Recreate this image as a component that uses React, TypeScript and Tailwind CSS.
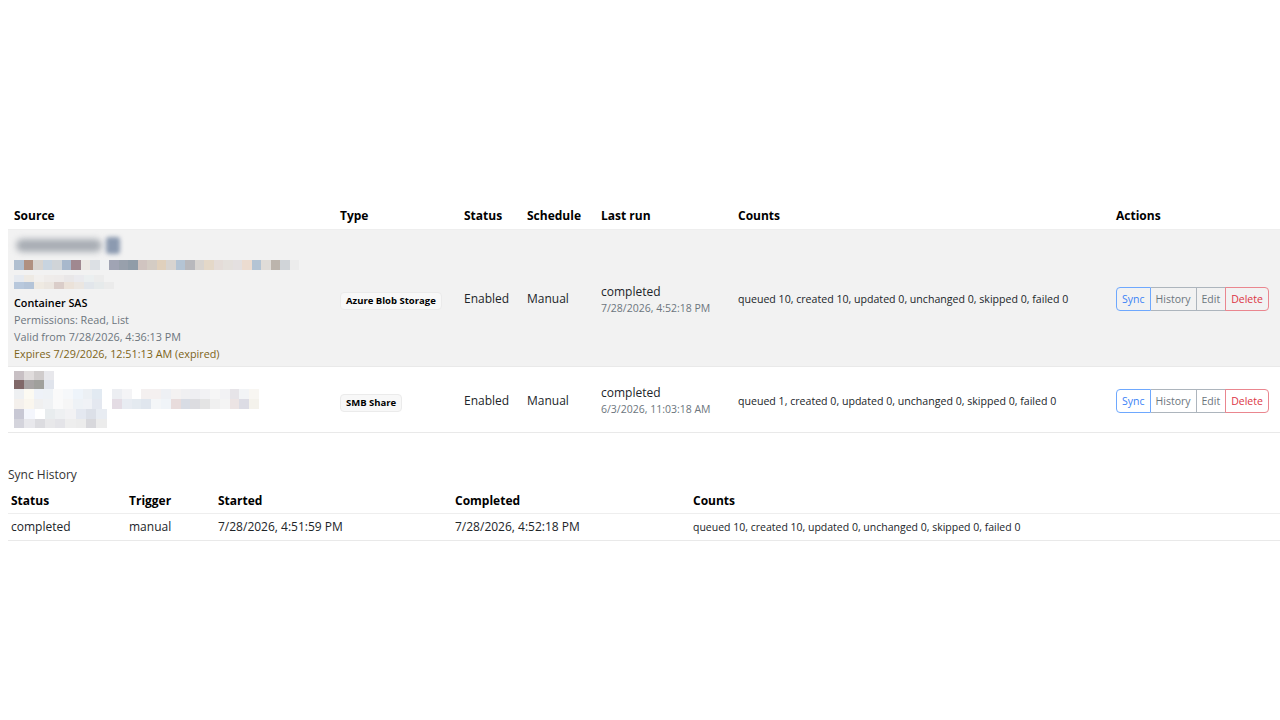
import React from 'react';

type Source = {
  kind: 'azure' | 'smb';
  type: string;
  status: string;
  schedule: string;
  lastStatus: string;
  lastAt: string;
  counts: string;
};

const sources: Source[] = [
  {
    kind: 'azure',
    type: 'Azure Blob Storage',
    status: 'Enabled',
    schedule: 'Manual',
    lastStatus: 'completed',
    lastAt: '7/28/2026, 4:52:18 PM',
    counts: 'queued 10, created 10, updated 0, unchanged 0, skipped 0, failed 0',
  },
  {
    kind: 'smb',
    type: 'SMB Share',
    status: 'Enabled',
    schedule: 'Manual',
    lastStatus: 'completed',
    lastAt: '6/3/2026, 11:03:18 AM',
    counts: 'queued 1, created 0, updated 0, unchanged 0, skipped 0, failed 0',
  },
];

// redacted bits of the source column, drawn as mosaic blocks
const azureLine2 = [
  '#b0bfd0', '#b09080', '#d8d4d0', '#c8d4e0', '#d0d4d8', '#a8b8cc', '#a08890', '#ece8e4', '#dce0e4', '#f0f2f4',
  '#a0a4b4', '#98a0ac', '#909ca8', '#d0c4c0', '#d4ccc4', '#e0d0bc', '#d8d4d0', '#b4c4d4', '#b8b8bc', '#d8d4d0',
  '#e4d8c8', '#e4dcd8', '#e4e0dc', '#e4e0e0', '#ecdcd0', '#b4c4d4', '#e0dcd8', '#bcb4ac', '#d0d4d8', '#ececec',
];
const azureLine3 = [
  ['#e6eaf0', '#eeeae4', '#f2f0ee', '#efecea', '#eeebea', '#e9e7e8', '#eaeaee', '#ebeff0', '#ececec', '#f2f2f2'],
  ['#b8c8dc', '#b4c4d8', '#efeae2', '#ebe6e0', '#dacdc9', '#ebe2d9', '#ebe6e1', '#e2e6eb', '#e6eaeb', '#ebebeb'],
];
const smbTop = [
  ['#c8c0c4', '#e0dcdc', '#d0cccc', '#e8e8ec'],
  ['#806868', '#a8a4a4', '#a0a09c', '#e0e4ec'],
];
const smbMid = [
  ['#eef0f2', '#fcfaf2', '#eef2f8', '#eef2f6', '#fafafa', '#f6f8fa', '#eef4fa', '#ecf0f4', '#e2eaf2', '#ffffff',
    '#eceef2', '#f4f4f6', '#ffffff', '#f4f0f0', '#f4f0f0', '#eef0f4', '#f4f2f2', '#f0f0f2', '#eeeef2', '#f2f2f4',
    '#f6f6f6', '#f2f2f4', '#e6e4e8', '#f2f4f6', '#f8f6f2'],
  ['#f4f0ec', '#faf6ee', '#f0f0f0', '#f0f2f4', '#fafafa', '#f6f6f6', '#eef2f6', '#f0f2f6', '#e4e8f0', '#ffffff',
    '#e4dce4', '#e8ecf2', '#e4eaf0', '#e0e6ee', '#f4f6f8', '#f0f4f8', '#e8dcdc', '#d8dce4', '#dcdce0', '#e4e4e4',
    '#f0f0f0', '#f4f4f4', '#ece4e4', '#dcdce4', '#f4f2ec'],
];
const smbBottom = [
  ['#c8c8d4', '#f4f6fc', '#ffffff', '#e8ecee', '#eef0f2', '#f2f2f4', '#e4e8f0', '#dce0e8', '#e8ecf2'],
  ['#d4d4dc', '#e8e8ec', '#dcdce0', '#e8e8ea', '#e4e4e8', '#eeeeee', '#ececec', '#d8d8dc', '#ececec'],
];

function Mosaic({ rows, w, h }: { rows: string[][]; w: number; h: number }) {
  return (
    <div className="flex flex-col">
      {rows.map((row, i) => (
        <div key={i} className="flex">
          {row.map((c, j) => (
            <span key={j} className="block shrink-0" style={{ width: w, height: h, background: c }} />
          ))}
        </div>
      ))}
    </div>
  );
}

function Badge({ children }: { children: React.ReactNode }) {
  return (
    <span className="inline-block rounded-[4px] border border-[#ebebeb] bg-[#f8f8f8] px-[5px] py-[2px] text-[9.5px] font-bold leading-[12px] text-black">
      {children}
    </span>
  );
}

function Actions() {
  return (
    <div className="flex text-[10.5px] leading-[14px]">
      <button className="rounded-l-[4px] border border-[#6ea8fe] px-[5px] py-[4px] text-[#3b82f6]">Sync</button>
      <button className="border-y border-r border-[#adb5bd] px-[5px] py-[4px] text-[#6c757d]">History</button>
      <button className="border-y border-r border-[#adb5bd] px-[5px] py-[4px] text-[#6c757d]">Edit</button>
      <button className="-ml-px rounded-r-[4px] border border-[#ea868f] px-[5px] py-[4px] text-[#dc3545]">Delete</button>
    </div>
  );
}

function SourceCell({ kind }: { kind: Source['kind'] }) {
  if (kind === 'azure') {
    return (
      <div className="flex flex-col">
        <div className="flex h-[22px] items-center gap-[4px] pl-[2px]">
          <span className="block h-[13px] w-[86px] rounded-full bg-[#a8adb4] blur-[3px]" />
          <span className="block h-[17px] w-[14px] rounded-[3px] bg-[#8c9ab0] blur-[2px]" />
        </div>
        <div className="mt-[4px]">
          <Mosaic rows={[azureLine2]} w={9.5} h={10} />
        </div>
        <div className="mt-[5px]">
          <Mosaic rows={azureLine3} w={10} h={7} />
        </div>
        <div className="mt-[5px] text-[10.8px] font-semibold leading-[17px] text-black">Container SAS</div>
        <div className="text-[10.8px] leading-[17px] text-[#6c757d]">Permissions: Read, List</div>
        <div className="text-[10.8px] leading-[17px] text-[#6c757d]">Valid from 7/28/2026, 4:36:13 PM</div>
        <div className="text-[10.8px] leading-[17px] text-[#7d6418]">Expires 7/29/2026, 12:51:13 AM (expired)</div>
      </div>
    );
  }
  return (
    <div className="flex flex-col">
      <Mosaic rows={smbTop} w={10} h={9} />
      <Mosaic rows={smbMid} w={9.8} h={10} />
      <Mosaic rows={smbBottom} w={10.3} h={9.5} />
    </div>
  );
}

export default function App() {
  return (
    <div
      className="min-h-[720px] bg-white px-[8px] pt-[206px] text-[#212529]"
      style={{ fontFamily: '"Segoe UI", "Open Sans", "Noto Sans", sans-serif' }}
    >
      <table className="w-[1272px] table-fixed border-collapse text-left">
        <thead>
          <tr className="border-b border-[#eeeeee] text-[12px] font-bold leading-[20px] text-black">
            <th className="w-[326px] px-[6px] pb-[3px] font-bold">Source</th>
            <th className="w-[124px] px-[6px] pb-[3px] font-bold">Type</th>
            <th className="w-[63px] px-[6px] pb-[3px] font-bold">Status</th>
            <th className="w-[74px] px-[6px] pb-[3px] font-bold">Schedule</th>
            <th className="w-[137px] px-[6px] pb-[3px] font-bold">Last run</th>
            <th className="w-[378px] px-[6px] pb-[3px] font-bold">Counts</th>
            <th className="px-[6px] pb-[3px] font-bold">Actions</th>
          </tr>
        </thead>
        <tbody>
          {sources.map((s, i) => (
            <tr key={i} className={`border-b border-[#e9e9e9] ${i === 0 ? 'bg-[#f2f2f2]' : 'bg-white'}`}>
              <td className="px-[6px] py-[4px] align-middle">
                <SourceCell kind={s.kind} />
              </td>
              <td className="px-[6px] py-[4px] align-middle">
                <Badge>{s.type}</Badge>
              </td>
              <td className="px-[6px] pt-[6px] pb-[4px] align-middle text-[12px] leading-[18px]">{s.status}</td>
              <td className="px-[6px] pt-[6px] pb-[4px] align-middle text-[12px] leading-[18px]">{s.schedule}</td>
              <td className="px-[6px] pt-[6px] pb-[4px] align-middle">
                <div className="text-[12px] leading-[17px]">{s.lastStatus}</div>
                <div className="text-[10.5px] leading-[16px] text-[#6c757d]">{s.lastAt}</div>
              </td>
              <td className="px-[6px] pt-[6px] pb-[4px] align-middle text-[10.6px] leading-[16px]">{s.counts}</td>
              <td className="px-[6px] pt-[6px] pb-[4px] align-middle">
                <Actions />
              </td>
            </tr>
          ))}
        </tbody>
      </table>

      <div className="mt-[33px] text-[12px] leading-[18px] text-[#333333]">Sync History</div>
      <table className="mt-[8px] w-[1272px] table-fixed border-collapse text-left">
        <thead>
          <tr className="border-b border-[#eeeeee] text-[12px] leading-[18px] text-black">
            <th className="w-[118px] px-[3px] pb-[3px] font-bold">Status</th>
            <th className="w-[89px] px-[3px] pb-[3px] font-bold">Trigger</th>
            <th className="w-[237px] px-[3px] pb-[3px] font-bold">Started</th>
            <th className="w-[238px] px-[3px] pb-[3px] font-bold">Completed</th>
            <th className="px-[3px] pb-[3px] font-bold">Counts</th>
          </tr>
        </thead>
        <tbody>
          <tr className="border-b border-[#e9e9e9] text-[12px] leading-[18px]">
            <td className="px-[3px] py-[4px]">completed</td>
            <td className="px-[3px] py-[4px]">manual</td>
            <td className="px-[3px] py-[4px]">7/28/2026, 4:51:59 PM</td>
            <td className="px-[3px] py-[4px]">7/28/2026, 4:52:18 PM</td>
            <td className="px-[3px] py-[4px] text-[10.5px]">queued 10, created 10, updated 0, unchanged 0, skipped 0, failed 0</td>
          </tr>
        </tbody>
      </table>
    </div>
  );
}
